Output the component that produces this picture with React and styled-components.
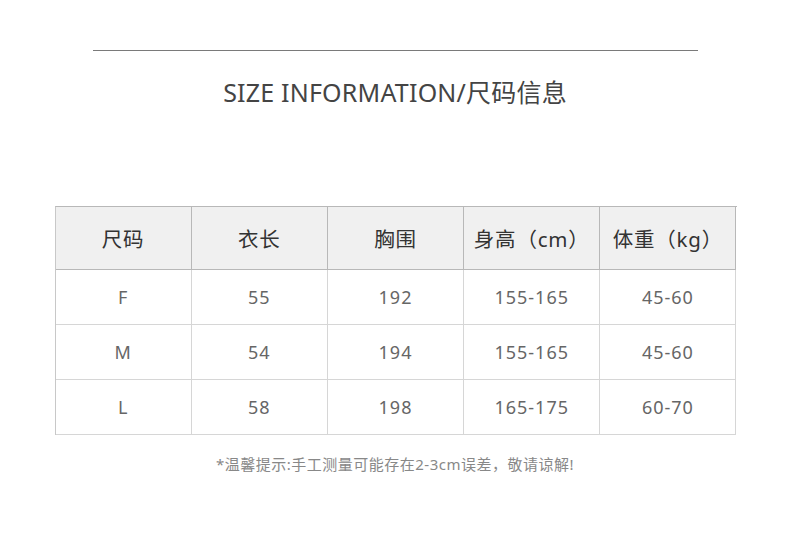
import React from 'react';
import styled, { createGlobalStyle } from 'styled-components';

const GlobalStyle = createGlobalStyle`
  body {
    margin: 0;
    background: #ffffff;
    font-family: "Noto Sans", "Noto Sans CJK SC", sans-serif;
  }
`;

const Page = styled.div`
  width: 790px;
  height: 546px;
  display: flex;
  flex-direction: column;
  align-items: center;
  padding-top: 50px;
  box-sizing: border-box;
`;

const Rule = styled.hr`
  width: 605px;
  margin: 0 0 0 1px;
  border: none;
  border-top: 1px solid #7a7a7a;
`;

const Title = styled.h1`
  margin: 23px 0 0;
  font-size: 25px;
  line-height: 36px;
  font-weight: 400;
  color: #444;
  letter-spacing: 0.2px;
`;

const Table = styled.div`
  margin: 96px 0 0 1px;
  width: 681px;
  display: grid;
  grid-template-columns: repeat(5, 1fr);
  border-left: 1px solid #c8c8c8;
  border-top: 1px solid #b8b8b8;
`;

const Cell = styled.div`
  display: flex;
  align-items: center;
  justify-content: center;
  height: ${(p) => (p.$head ? '62px' : '54px')};
  background: ${(p) => (p.$head ? '#f0f0f0' : '#fff')};
  border-right: 1px solid ${(p) => (p.$head ? '#b8b8b8' : '#d6d6d6')};
  border-bottom: 1px solid ${(p) => (p.$head ? '#b8b8b8' : '#d6d6d6')};
  font-size: ${(p) => (p.$head ? '20.5px' : '18px')};
  letter-spacing: ${(p) => (p.$head ? '0.8px' : '1px')};
  color: ${(p) => (p.$head ? '#333' : '#666')};
`;

const Note = styled.p`
  margin: 18px 0 0;
  font-size: 15px;
  letter-spacing: 0.5px;
  color: #888;
`;

const head = ['尺码', '衣长', '胸围', '身高（cm）', '体重（kg）'];
const rows = [
  ['F', '55', '192', '155-165', '45-60'],
  ['M', '54', '194', '155-165', '45-60'],
  ['L', '58', '198', '165-175', '60-70'],
];

export default function App() {
  return (
    <Page>
      <GlobalStyle />
      <Rule />
      <Title>SIZE INFORMATION/尺码信息</Title>
      <Table>
        {head.map((h) => (
          <Cell $head key={h}>{h}</Cell>
        ))}
        {rows.map((r) =>
          r.map((v, i) => <Cell key={r[0] + i}>{v}</Cell>)
        )}
      </Table>
      <Note>*温馨提示:手工测量可能存在2-3cm误差，敬请谅解!</Note>
    </Page>
  );
}
